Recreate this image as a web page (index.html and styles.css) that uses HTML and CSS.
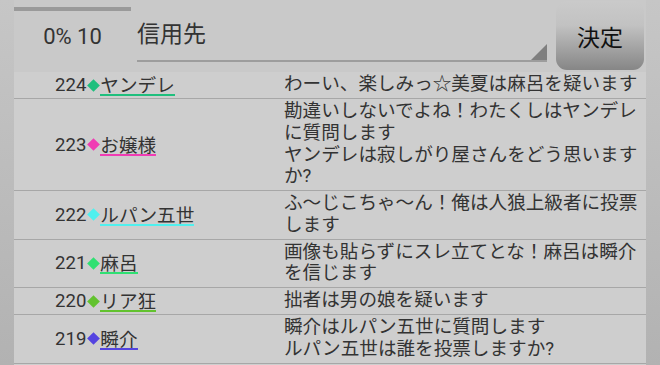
FILE: index.html
```html
<!DOCTYPE html>
<html lang="ja">
<head>
  <meta charset="UTF-8">
  <meta name="viewport" content="width=device-width, initial-scale=1.0">
  <title>人狼ログ</title>
  <link rel="stylesheet" href="styles.css">
</head>
<body>
  <div class="screen">
    <header class="top">
      <div class="progress">
        <div class="bar"></div>
        <div class="pct">0% 10</div>
      </div>
      <div class="spinner">信用先</div>
      <button class="decide">決定</button>
    </header>

    <ul class="log">
      <li class="row">
        <div class="who"><span class="no">224</span><span class="mark" style="--c:#1fbf7d"></span><span class="name" style="--c:#1fbf7d">ヤンデレ</span></div>
        <div class="msg">わーい、楽しみっ☆美夏は麻呂を疑います</div>
      </li>
      <li class="row">
        <div class="who"><span class="no">223</span><span class="mark" style="--c:#f03cb4"></span><span class="name" style="--c:#f03cb4">お嬢様</span></div>
        <div class="msg">勘違いしないでよね！わたくしはヤンデレに質問します<br>ヤンデレは寂しがり屋さんをどう思いますか?</div>
      </li>
      <li class="row">
        <div class="who"><span class="no">222</span><span class="mark" style="--c:#4ff0ee"></span><span class="name" style="--c:#4ff0ee">ルパン五世</span></div>
        <div class="msg">ふ～じこちゃ～ん！俺は人狼上級者に投票します</div>
      </li>
      <li class="row">
        <div class="who"><span class="no">221</span><span class="mark" style="--c:#2fe072"></span><span class="name" style="--c:#2fe072">麻呂</span></div>
        <div class="msg">画像も貼らずにスレ立てとな！麻呂は瞬介を信じます</div>
      </li>
      <li class="row">
        <div class="who"><span class="no">220</span><span class="mark" style="--c:#62c22e"></span><span class="name" style="--c:#62c22e">リア狂</span></div>
        <div class="msg">拙者は男の娘を疑います</div>
      </li>
      <li class="row">
        <div class="who"><span class="no">219</span><span class="mark" style="--c:#5444e0"></span><span class="name" style="--c:#5444e0">瞬介</span></div>
        <div class="msg">瞬介はルパン五世に質問します<br>ルパン五世は誰を投票しますか?</div>
      </li>
    </ul>
  </div>
</body>
</html>
```

FILE: styles.css
```css
html, body { height: 100%; }
body { margin: 0; overflow: hidden; background: linear-gradient(#c6c6c6, #b2b2b2); color: #333; font-family: Roboto, "Noto Sans CJK JP", sans-serif; }
.screen { margin: 0 14px; height: 100%; background: #cecece; }

/* header: progress, spinner, button */
.top { display: flex; align-items: flex-start; height: 72px; background: #c9c9c9; }
.progress { width: 117px; padding-top: 7px; }
.bar { height: 4px; background: #9a9a9a; }
.pct { margin-top: 13px; text-align: center; font-size: 22px; line-height: 26px; color: #333; }
.spinner { position: relative; box-sizing: border-box; width: 410px; height: 62px; margin-left: 6px; padding-top: 16px; border-bottom: 2px solid #9d9d9d; font-family: "Noto Sans CJK JP", sans-serif; font-size: 23px; line-height: 32px; color: #333; }
.spinner::after { content: ""; position: absolute; right: 0; bottom: 0; width: 16px; height: 16px; background: #7f7f7f; clip-path: polygon(100% 0, 100% 100%, 0 100%); }
.decide { width: 88px; height: 69px; margin: 1px 0 0 9px; padding: 0; border: none; border-radius: 11px; background: linear-gradient(#cacaca 0%, #c2c2c2 35%, #868686 100%); color: #111; font-family: "Noto Sans CJK JP", sans-serif; font-size: 23px; }

/* log list */
.log { list-style: none; margin: 0; padding: 0; background: #cecece; }
.row { display: flex; align-items: center; padding: 2px 0 2px; border-bottom: 1px solid #a7a7a7; }
.who { box-sizing: border-box; width: 270px; padding-left: 41px; white-space: nowrap; font-size: 18.6px; line-height: 20px; }
.no { vertical-align: middle; }
.mark { display: inline-block; width: 9px; height: 9px; margin: 0 2px 0 3px; background: var(--c); transform: rotate(45deg); vertical-align: middle; }
.name { display: inline-block; border-bottom: 2px solid var(--c); vertical-align: middle; font-family: "Noto Sans CJK JP", sans-serif; }
.msg { flex: 1; font-size: 18.6px; line-height: 21.75px; font-family: Roboto, "Noto Sans CJK JP", sans-serif; }
```
